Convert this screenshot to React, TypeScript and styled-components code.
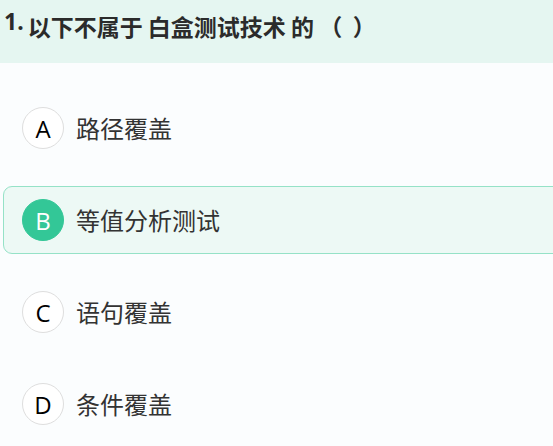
import React from "react";
import styled, { createGlobalStyle } from "styled-components";

const GlobalStyle = createGlobalStyle`
  html, body {
    margin: 0;
    padding: 0;
    background: #fbfdfe;
    overflow: hidden;
  }
  body {
    font-family: "Noto Sans", "Noto Sans CJK SC", sans-serif;
  }
`;

const Page = styled.div`
  width: 553px;
  height: 446px;
  overflow: hidden;
  background: #fbfdfe;
`;

const Header = styled.div`
  height: 63px;
  background: #e5f6f1;
  display: flex;
  align-items: flex-start;
  padding: 9px 0 0 4px;
  box-sizing: border-box;
  color: #2b2b2b;
`;

const Num = styled.span`
  font-family: "Noto Sans", "Noto Sans CJK SC", sans-serif;
  font-size: 23px;
  font-weight: 700;
  line-height: 24px;
  margin-right: 4px;
`;

const Title = styled.span`
  font-family: "Noto Sans CJK SC", sans-serif;
  font-size: 23px;
  font-weight: 700;
  line-height: 32px;
  padding-top: 1px;
  white-space: pre;
`;

const List = styled.div`
  display: flex;
  flex-direction: column;
  gap: 24px;
  padding: 31px 0 0 3px;
`;

const Row = styled.div<{ $active?: boolean }>`
  width: 600px;
  height: 68px;
  box-sizing: border-box;
  display: flex;
  align-items: center;
  gap: 12px;
  padding-left: 18px;
  border-radius: 9px;
  border: 1px solid ${(p) => (p.$active ? "#95e2c7" : "transparent")};
  background: ${(p) => (p.$active ? "#edf9f5" : "transparent")};
`;

const Badge = styled.div<{ $active?: boolean }>`
  width: 42px;
  height: 42px;
  box-sizing: border-box;
  border-radius: 50%;
  display: flex;
  align-items: center;
  justify-content: center;
  font-family: "Open Sans", "Noto Sans", sans-serif;
  font-size: 24px;
  color: ${(p) => (p.$active ? "#ffffff" : "#000000")};
  background: ${(p) => (p.$active ? "#33c797" : "#ffffff")};
  border: 1px solid ${(p) => (p.$active ? "#33c797" : "#dedede")};
`;

const Label = styled.span`
  font-family: "Noto Sans CJK SC", sans-serif;
  font-size: 24px;
  color: #333333;
  line-height: 32px;
`;

const options = [
  { key: "A", text: "路径覆盖" },
  { key: "B", text: "等值分析测试", active: true },
  { key: "C", text: "语句覆盖" },
  { key: "D", text: "条件覆盖" },
];

export default function App() {
  return (
    <Page>
      <GlobalStyle />
      <Header>
        <Num>1.</Num>
        <Title>{"以下不属于 白盒测试技术 的 （  ）"}</Title>
      </Header>
      <List>
        {options.map((o) => (
          <Row key={o.key} $active={o.active}>
            <Badge $active={o.active}>{o.key}</Badge>
            <Label>{o.text}</Label>
          </Row>
        ))}
      </List>
    </Page>
  );
}
